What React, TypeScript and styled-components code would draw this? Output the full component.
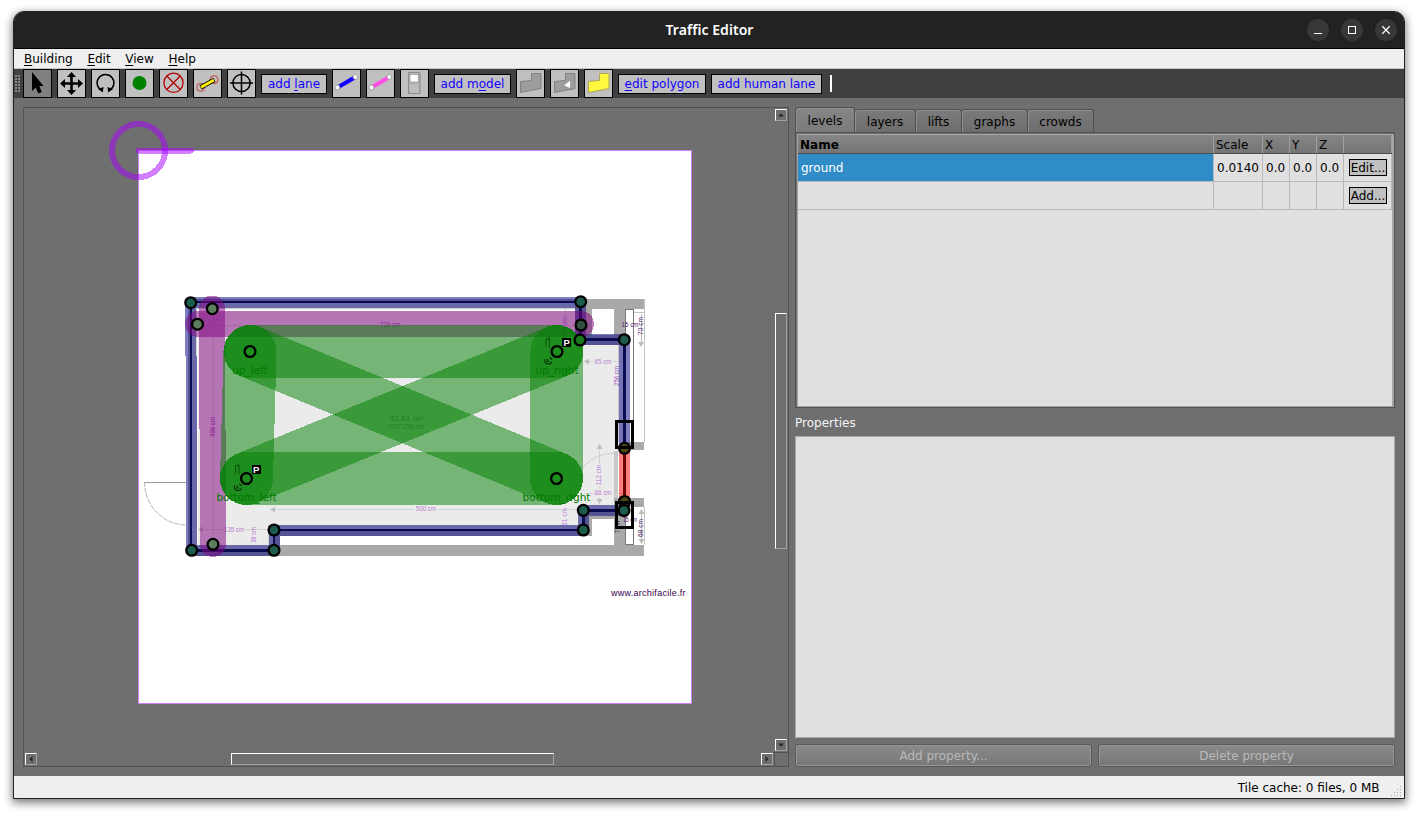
import React from 'react';
import styled, { createGlobalStyle, css } from 'styled-components';

const GlobalStyle = createGlobalStyle`
  * { box-sizing: border-box; }
  body {
    margin: 0;
    background: #fff;
    overflow: hidden;
    font-family: "DejaVu Sans", sans-serif;
    font-size: 12px;
    color: #000;
  }
`;

const Desktop = styled.div`
  padding: 11px 13px 16px;
  height: 815px;
`;

const Window = styled.div`
  display: flex;
  flex-direction: column;
  width: 1392px;
  height: 788px;
  border: 1px solid #222;
  border-radius: 11px 11px 0 0;
  background: #6f6f6f;
  box-shadow: 0 3px 9px 1px rgba(0, 0, 0, 0.5);
  overflow: hidden;
`;

const TitleBar = styled.header`
  display: grid;
  grid-template-columns: 1fr auto 1fr;
  align-items: center;
  height: 37px;
  background: #222;
  border-bottom: 1px solid #000;
`;

const Title = styled.h1`
  grid-column: 2;
  margin: 0;
  padding-left: 1px;
  color: #fff;
  font: 600 14px/20px "Noto Sans", sans-serif;
  letter-spacing: 0.05px;
`;

const WindowButtons = styled.div`
  display: flex;
  justify-content: flex-end;
  gap: 12px;
  padding-right: 7px;
`;

const WindowButton = styled.div`
  width: 22px;
  height: 22px;
  border-radius: 50%;
  background: #373737;
  svg { display: block; }
`;

const MenuBar = styled.nav`
  display: flex;
  gap: 14.7px;
  height: 20px;
  padding-left: 10px;
  background: #efefef;
  border-bottom: 1px solid #c6c6c6;
  line-height: 20px;
`;

const Mnemonic = styled.span`
  text-decoration: underline;
  text-underline-offset: 2px;
  text-decoration-thickness: 1px;
  text-decoration-skip-ink: none;
`;

const ToolBar = styled.div`
  display: flex;
  align-items: center;
  gap: 5px;
  height: 29px;
  background: #404040;
`;

const Grip = styled.svg`
  width: 6px;
  height: 18px;
  margin: 0 -3px 0 1px;
`;

const ToolButton = styled.button<{ $active?: boolean }>`
  width: 29px;
  height: 29px;
  padding: 0;
  border: 1px solid #000;
  background: ${p => (p.$active ? '#808080' : '#c0c0c0')};
  svg { display: block; }
`;

const ToolTextButton = styled.button<{ $width: number }>`
  width: ${p => p.$width}px;
  height: 20px;
  padding: 0;
  border: 1px solid #000;
  background: #c0c0c0;
  color: #1200ff;
  font: 12px/18px "DejaVu Sans", sans-serif;
  white-space: nowrap;
`;

const ToolCaret = styled.div`
  width: 2px;
  height: 17px;
  margin-left: 3px;
  background: #fff;
`;

const Workspace = styled.main`
  display: grid;
  grid-template-columns: 766px 600px;
  gap: 6px;
  height: 678px;
  padding: 9px;
`;

const CanvasFrame = styled.section`
  display: grid;
  grid-template-columns: 750px 14px;
  grid-template-rows: 644px 14px;
  border: 1px solid #525252;
`;

const ScrollBar = styled.div<{ $vertical?: boolean }>`
  display: flex;
  flex-direction: ${p => (p.$vertical ? 'column' : 'row')};
  padding: 1px;
`;

const bevel = css`
  border: 1px solid;
  border-color: #fff #a2a2a2 #a2a2a2 #fff;
`;

const ScrollArrow = styled.div<{ $turn: number; $end?: boolean }>`
  ${bevel}
  width: 12px;
  height: 12px;
  ${p => p.$end && 'margin-top: auto; margin-left: auto;'}
  svg { display: block; transform: rotate(${p => p.$turn}deg); }
`;

const VerticalThumb = styled.div`
  ${bevel}
  height: 236px;
  margin-top: 192px;
`;

const HorizontalThumb = styled.div`
  ${bevel}
  width: 323px;
  margin-left: 194px;
`;

const ScrollCorner = styled.div`
  border-left: 1px solid #525252;
  border-top: 1px solid #525252;
`;

const SidePanel = styled.aside`
  display: flex;
  flex-direction: column;
`;

const Tabs = styled.div`
  display: flex;
  align-items: flex-end;
  height: 25px;
`;

const Tab = styled.div<{ $width: number; $active?: boolean }>`
  width: ${p => p.$width}px;
  height: ${p => (p.$active ? 26 : 23)}px;
  margin-bottom: ${p => (p.$active ? -1 : 0)}px;
  border: 1px solid #505050;
  border-bottom: 0;
  border-left-width: ${p => (p.$active ? 1 : 0)}px;
  border-radius: 3px 3px 0 0;
  background: ${p => (p.$active ? 'linear-gradient(#868686, #7a7a7a)' : 'linear-gradient(#7a7a7a, #6e6e6e)')};
  box-shadow: inset 1px 1px 0 #8f8f8f;
  text-align: center;
  line-height: ${p => (p.$active ? 26 : 25)}px;
`;

const Pane = styled.div`
  height: 276px;
  padding: 1px 0 0 1px;
  border: 1px solid #525252;
`;

const TableFrame = styled.div`
  height: 273px;
  border: 1px solid #a5a5a5;
  border-right-width: 2px;
  background: #e0e0e0;
`;

const columns = 'display: grid; grid-template-columns: 416px 49px 27px 27px 27px 48px;';

const TableHeader = styled.div`
  ${columns}
  height: 19px;
  background: linear-gradient(#868686, #757575);
  border-bottom: 1px solid #4c4c4c;
`;

const HeaderCell = styled.div<{ $bold?: boolean }>`
  padding-left: 2px;
  border-right: 1px solid #a0a0a0;
  line-height: 20px;
  height: 18px;
  font-weight: ${p => (p.$bold ? 700 : 400)};
`;

const TableRow = styled.div`
  ${columns}
  height: 28px;
`;

const Cell = styled.div<{ $selected?: boolean }>`
  display: flex;
  align-items: center;
  padding-left: 3px;
  border-right: 1px solid #b8b8b8;
  border-bottom: 1px solid #b8b8b8;
  color: ${p => (p.$selected ? '#fff' : '#000')};
  background: ${p => (p.$selected ? '#308cc6' : 'transparent')};
`;

const CellButton = styled.button`
  width: 38px;
  height: 17px;
  margin-left: 2px;
  padding: 1px 0 0;
  border: 1px solid #000;
  background: #c0c0c0;
  font: 12px/14px "DejaVu Sans", sans-serif;
  white-space: nowrap;
`;

const SectionLabel = styled.div`
  height: 28px;
  line-height: 30px;
  color: #f4f4f4;
`;

const PropertyList = styled.div`
  height: 302px;
  border: 1px solid #a8a8a8;
  background: #e0e0e0;
`;

const ButtonRow = styled.div`
  display: grid;
  grid-template-columns: 1fr 1fr;
  gap: 6px;
  margin-top: 6px;
`;

const PushButton = styled.button`
  height: 23px;
  padding: 2px 0 0;
  border: 1px solid #595959;
  border-radius: 3px;
  background: linear-gradient(#8a8a8a, #777);
  box-shadow: inset 0 0 0 1px #969696;
  color: #b9b9b9;
  font: 12px/19px "DejaVu Sans", sans-serif;
`;

const StatusBar = styled.footer`
  display: flex;
  justify-content: flex-end;
  height: 22px;
  background: #efefef;
  line-height: 24px;
`;

const SizeGrip = styled.svg`
  width: 12px;
  height: 12px;
  margin: 10px 1px 0 11.5px;
`;

const range = (n: number) => Array.from({ length: n }, (_, i) => i);

const outline = 'M3.5 11.5 L14.5 10.5 V3.5 H24 V18.5 L3.5 22.5Z';

const icons: Record<string, React.ReactNode> = {
  select: <path d="M8 2 V21 L11.800 17.500 L14.200 23.500 L17.800 22 L15.300 16 H19.500Z" fill="#000" />,
  move: (
    <path
      d="M13.500 2 L18 7 H14.800 V12.200 H20 V9 L25 13.500 L20 18 V14.800 H14.800 V20 H18 L13.500 25 L9 20 H12.200 V14.800 H7 V18 L2 13.500 L7 9 V12.200 H12.200 V7 H9Z"
      fill="#000"
    />
  ),
  rotate: (
    <g>
      <path d="M9.400 20.200 A8.400 8.400 0 1 1 17.600 20.200" fill="none" stroke="#000" strokeWidth="1.500" />
      <path d="M6 19 L11.600 17 L10.800 22.500Z M21 19 L15.400 17 L16.200 22.500Z" fill="#000" />
    </g>
  ),
  vertex: <circle cx="13.500" cy="13" r="7" fill="#008000" />,
  fiducial: (
    <g fill="none" stroke="#b40000" strokeWidth="1.300">
      <circle cx="13.500" cy="12.800" r="9.600" />
      <path d="M6.800 6 L20.200 19.500 M20.200 6 L6.800 19.500" />
    </g>
  ),
  measurement: (
    <g>
      <g fill="none" stroke="#c03030" strokeWidth=".9">
        <circle cx="6.700" cy="17.300" r="4" />
        <circle cx="20" cy="9.700" r="4" />
      </g>
      <path d="M6.500 17.500 L20.500 9.800" stroke="#000" strokeWidth="4.400" />
      <path d="M7 17.200 L20 10.100" stroke="#fff200" strokeWidth="2.800" />
    </g>
  ),
  origin: (
    <g fill="none" stroke="#000" strokeWidth="1.500">
      <circle cx="13.500" cy="13" r="8.600" />
      <path d="M13.500 1.500 V24.500 M2 13 H25" />
    </g>
  ),
  wall: (
    <g>
      <path d="M5 17.200 L22 7.200" stroke="#1200ff" strokeWidth="4.200" />
      <g fill="#fff" stroke="#888" strokeWidth=".7">
        <circle cx="4.500" cy="17.500" r="2.400" />
        <circle cx="22.300" cy="7" r="2.400" />
      </g>
    </g>
  ),
  door: (
    <g>
      <path d="M5 17.200 L22 7.200" stroke="#ff4fe8" strokeWidth="4.200" />
      <g fill="#fff" stroke="#888" strokeWidth=".7">
        <circle cx="4.500" cy="17.500" r="2.400" />
        <circle cx="22.300" cy="7" r="2.400" />
      </g>
    </g>
  ),
  lift: (
    <g>
      <rect x="7.500" y="2.500" width="11.500" height="21" rx="1" fill="#bdbdbd" stroke="#8c8c8c" strokeWidth="1.200" />
      <rect x="9" y="4.500" width="8.500" height="7.500" fill="#fff" stroke="#999" strokeWidth=".8" />
      <path d="M8 13.500 H18.500 M16.500 15 l2 2" stroke="#a0a0a0" strokeWidth=".8" />
    </g>
  ),
  floor: <path d={outline} fill="#9d9d9d" stroke="#818181" />,
  hole: (
    <g>
      <path d={outline} fill="#9d9d9d" stroke="#818181" />
      <path d="M12.500 15.500 L19.500 10 V18.500Z" fill="#fff" stroke="#888" strokeWidth=".6" />
    </g>
  ),
  roi: <path d={outline} fill="#fff83c" stroke="#b0a850" />,
};

const Icon = ({ name }: { name: string }) => (
  <svg width="27" height="27" viewBox="0 0 27 27">{icons[name]}</svg>
);

const Arrow = () => (
  <svg width="10" height="10" viewBox="0 0 10 10">
    <path d="M5 3.200 L8 6.500 H2Z" fill="#2a2a2a" />
  </svg>
);

type Point = [number, number];

const UL: Point = [250, 351.5];
const UR: Point = [557, 351.5];
const BL: Point = [246.5, 478.5];
const BR: Point = [556.5, 478.5];

const lanes: [Point, Point][] = [[UL, UR], [UL, BL], [UL, BR], [UR, BL], [UR, BR], [BL, BR]];

const wallPath =
  'M624.500 448 V339.500 H580.500 V302 L190.900 302.400 L191.400 550.500 H274 V530 H583.500 V510.500 H624.500 V502';

const wallVertices: Point[] = [
  [190.7, 302.7], [580.7, 301.7], [624.3, 339.7],
  [583.3, 510.3], [583.3, 530], [274, 530], [274, 550.3], [191.7, 550.3],
];

const Segment = ({ ends, ...rest }: { ends: [Point, Point] } & Omit<React.SVGProps<SVGLineElement>, 'ref'>) => (
  <line x1={ends[0][0]} y1={ends[0][1]} x2={ends[1][0]} y2={ends[1][1]} {...rest} />
);

const Vertex = ({ at, fill = 'none' }: { at: Point; fill?: string }) => (
  <circle cx={at[0]} cy={at[1]} r="5.400" fill={fill} stroke="#000" strokeWidth="2.300" />
);

const Dimension = ({ x, y, w, turn, color = '#bb80d2', children }: {
  x: number; y: number; w: number; turn?: boolean; color?: string; children: string;
}) => (
  <text
    x={x}
    y={y}
    textAnchor="middle"
    textLength={w}
    lengthAdjust="spacingAndGlyphs"
    fill={color}
    transform={turn ? `rotate(-90 ${x} ${y})` : undefined}
    fontFamily="Liberation Sans, sans-serif"
    fontSize="7.500"
  >
    {children}
  </text>
);

const RobotMarks = ({ x, y }: { x: number; y: number }) => (
  <g>
    <path d={`M${x - 11} ${y - 5} v-8 h3.500 v9 M${x - 8} ${y - 15} v2`} fill="none" stroke="#0a4a0a" strokeWidth=".9" />
    <rect x={x + 5} y={y - 14} width="9" height="9" fill="#000" shapeRendering="crispEdges" />
    <text x={x + 9.7} y={y - 6} textAnchor="middle" fill="#fff" fontSize="9.500" fontWeight="700" fontFamily="Liberation Sans, sans-serif">P</text>
    <path d={`M${x - 12} ${y + 7} v3 l2 2 h3 l2 -2 M${x - 9.5} ${y + 7} v2.500 h2 M${x - 7} ${y + 5.5} l2 2`} fill="none" stroke="#042c04" strokeWidth="1.100" />
  </g>
);

const FloorPlan = () => (
  <svg width="750" height="644" viewBox="24 108 750 644">
    <g shapeRendering="crispEdges">
      <rect x="138.500" y="150.500" width="553" height="553" fill="#fff" stroke="#d07fff" />
      <path d="M188 299 H644 V309 H188Z M188 299 H197 V556 H188Z M188 545 H644 V556 H188Z M614 299 H626 V345 H614Z M626 442 H644 V450 H626Z M614 498 H644 V507 H614Z M614 498 H626 V556 H614Z M575 309 H592 V345 H575Z M592 335 H614 V345 H592Z" fill="#a9a9a9" />
      <path d="M192 303 H575 V309 H197 V545 H192Z M192 545 H268 V550 H192Z" fill="#d2d2d2" />
      <path d="M197 309 H575 V345 H625 V450 H614 V515 H579 V525 H268 V545 H197Z" fill="#ebebeb" />
      <path d="M197 310.500 H575 M197.500 310 V545" stroke="#fff" fill="none" />
      <path d="M268 525 H579 V505 H614 V519 H592 V536 H280 V545 H268Z" fill="#a9a9a9" />
      <path d="M268 525 H579 V530 H274 V545 H268Z M579 505 H614 V510 H584 V530 H579Z" fill="#d2d2d2" />
      <path d="M614 451 H618 V498 H614Z M618 345 H619 V442 H618Z" fill="#c8c8c8" />
      <path d="M618 451 H645 V498 H618Z" fill="#fff" />
      <path d="M644.500 299 V442 M644.500 507 V545 M634 312.500 H645" fill="none" stroke="#c4c4c4" />
      <path d="M625.500 442 V309.500 H633.500 V442 M625.500 507 V544.500 H633.500 V507" fill="#fff" stroke="#777" />
      <path d="M197 325.500 H575 M213.500 309 V545 M274 509.500 H583 M199 529.500 H268 M565.500 309 V345 M584 361.500 H622 M599.500 447 V505 M584 493.500 H622 M584 509.500 H614" fill="none" stroke="#d2d2d2" />
    </g>
    <path d="M144 482.500 H186" stroke="#999" fill="none" />
    <path d="M144.500 482 A42 43 0 0 0 186 525" stroke="#aaa" strokeWidth=".9" strokeDasharray="5 1" fill="none" />
    <path d="M570 498 A45 45 0 0 1 615 453" stroke="#cfcfcf" fill="none" />
    <path d="M599.500 444 l3 5 h-6Z M599.500 504 l3 -5 h-6Z M641 347 l3 -5 h-6Z M641.500 509 l3 5 h-6Z M641.500 544 l3 -5 h-6Z M584 361.500 l5 -3 v6Z M270 509.500 l5 -3 v6Z M198 529.500 l5 -3 v6Z" fill="#bdbdbd" />
    <path d="M641.500 314 V343 M641.500 511 V542" stroke="#b9b9b9" />

    <path d="M378 319 h24 v9 h-24Z M414 504 h24 v9 h-24Z M223 524 h22 v9 h-22Z M593 357 h20 v8 h-20Z M596 464 h8 v22 h-8Z M593 489 h20 v8 h-20Z" fill="#ebebeb" />
    <Dimension x={390} y={326.5} w={20} color="#a050c0">729 cm</Dimension>
    <Dimension x={426} y={511} w={20}>500 cm</Dimension>
    <Dimension x={234} y={531.5} w={20}>135 cm</Dimension>
    <Dimension x={256} y={535} w={16} turn>38 cm</Dimension>
    <Dimension x={215} y={427} w={20} turn color="#902898">496 cm</Dimension>
    <Dimension x={603} y={363.5} w={17}>65 cm</Dimension>
    <Dimension x={603} y={495} w={17}>88 cm</Dimension>
    <Dimension x={601} y={475} w={20} turn>112 cm</Dimension>
    <Dimension x={619} y={376} w={20} turn color="#a060c0">256 cm</Dimension>
    <Dimension x={567} y={517} w={18} turn>31 cm</Dimension>
    <Dimension x={567} y={327} w={20} turn>36 cm</Dimension>
    <Dimension x={630} y={327} w={17} color="#5a2070">15 cm</Dimension>
    <Dimension x={643} y={326} w={18} turn color="#5a2070">70 cm</Dimension>
    <Dimension x={643} y={528} w={18} turn color="#4a2060">68 cm</Dimension>
    <Dimension x={620} y={527} w={12} turn color="#4a2060">7 cm</Dimension>
    <Dimension x={630} y={522} w={14} color="#5a2070">15 cm</Dimension>
    <Dimension x={406} y={421} w={34} color="#777">32.61 m²</Dimension>
    <Dimension x={406} y={429} w={36} color="#888">HSP 250 cm</Dimension>
    <text x="611" y="596" textLength="74.500" fill="#35004f" fontFamily="Liberation Sans, sans-serif" fontSize="9">www.archifacile.fr</text>

    <g shapeRendering="crispEdges" fill="none">
      <path d={wallPath} stroke="#000080" strokeOpacity=".5" strokeWidth="11" strokeLinejoin="round" />
      <path d={wallPath} stroke="#0b0b52" strokeWidth="2.200" />
      <path d="M624.500 448 V502" stroke="#f00" strokeOpacity=".5" strokeWidth="11" />
      <path d="M624.500 448 V502" stroke="#700000" strokeWidth="2.200" />
      <Segment ends={[[198, 324], [581, 324]]} stroke="#800080" strokeOpacity=".5" strokeWidth="26" strokeLinecap="round" />
      <Segment ends={[[212, 308.5], [213, 544]]} stroke="#800080" strokeOpacity=".5" strokeWidth="26" strokeLinecap="round" />
      {lanes.map((ends, i) => (
        <Segment key={i} ends={ends} stroke="#008000" strokeOpacity=".5" strokeWidth="53" strokeLinecap="round" />
      ))}
    </g>

    <g fill="#007a00" fontFamily="DejaVu Sans, sans-serif" fontSize="10.500" textAnchor="middle">
      <text x="250" y="374">up_left</text>
      <text x="557" y="374">up_right</text>
      <text x="246.500" y="501">bottom_left</text>
      <text x="556.500" y="501">bottom_right</text>
    </g>

    {wallVertices.map((at, i) => <Vertex key={i} at={at} fill="#1b5c4d" />)}
    <Vertex at={[212.3, 308.7]} fill="#5d7d5f" />
    <Vertex at={[197.5, 324.2]} fill="#5d7d5f" />
    <Vertex at={[213, 544.3]} fill="#5d7d5f" />
    <Vertex at={[581, 325]} fill="#33513f" />
    <Vertex at={[580, 340]} fill="#18781c" />
    <Vertex at={[624.5, 448.3]} fill="#4c4a10" />
    <Vertex at={[624.5, 501.5]} fill="#4c4a10" />
    <Vertex at={[624, 510.5]} fill="#1b5c4d" />
    {[UL, UR, BL, BR].map((at, i) => <Vertex key={i} at={at} />)}
    <path d="M616.500 421.500 H632.500 V447.500 H616.500Z M616.500 502 H632.500 V527 H616.500Z" fill="none" stroke="#000" strokeWidth="3" shapeRendering="crispEdges" />
    <RobotMarks x={557} y={352} />
    <RobotMarks x={246.5} y={478.5} />

    <g fill="none" stroke="#a800ff" strokeOpacity=".5" strokeWidth="6" shapeRendering="crispEdges">
      <circle cx="138.500" cy="150.500" r="26.500" />
      <path d="M138.500 150.500 H191" strokeLinecap="round" />
    </g>
  </svg>
);

export default function App() {
  return (
    <>
      <GlobalStyle />
      <Desktop>
        <Window>
          <TitleBar>
            <Title>Traffic Editor</Title>
            <WindowButtons>
              <WindowButton><svg width="22" height="22"><path d="M7 14.500 h8" stroke="#fff" /></svg></WindowButton>
              <WindowButton><svg width="22" height="22"><rect x="7.500" y="7.500" width="7" height="7" fill="none" stroke="#fff" /></svg></WindowButton>
              <WindowButton><svg width="22" height="22"><path d="M7.300 7.300 L14.700 14.700 M14.700 7.300 L7.300 14.700" stroke="#fff" strokeWidth="1.300" /></svg></WindowButton>
            </WindowButtons>
          </TitleBar>
          <MenuBar>
            <span><Mnemonic>B</Mnemonic>uilding</span>
            <span><Mnemonic>E</Mnemonic>dit</span>
            <span><Mnemonic>V</Mnemonic>iew</span>
            <span><Mnemonic>H</Mnemonic>elp</span>
          </MenuBar>
          <ToolBar>
            <Grip>
              {range(12).map(i => (
                <rect key={i} x={(i % 2) * 3} y={Math.floor(i / 2) * 3} width="2" height="2" fill="#8a8a8a" />
              ))}
            </Grip>
            <ToolButton $active><Icon name="select" /></ToolButton>
            <ToolButton><Icon name="move" /></ToolButton>
            <ToolButton><Icon name="rotate" /></ToolButton>
            <ToolButton><Icon name="vertex" /></ToolButton>
            <ToolButton><Icon name="fiducial" /></ToolButton>
            <ToolButton><Icon name="measurement" /></ToolButton>
            <ToolButton><Icon name="origin" /></ToolButton>
            <ToolTextButton $width={66}>add <Mnemonic>l</Mnemonic>ane</ToolTextButton>
            <ToolButton><Icon name="wall" /></ToolButton>
            <ToolButton><Icon name="door" /></ToolButton>
            <ToolButton><Icon name="lift" /></ToolButton>
            <ToolTextButton $width={77}>add m<Mnemonic>o</Mnemonic>del</ToolTextButton>
            <ToolButton><Icon name="floor" /></ToolButton>
            <ToolButton><Icon name="hole" /></ToolButton>
            <ToolButton><Icon name="roi" /></ToolButton>
            <ToolTextButton $width={88}><Mnemonic>e</Mnemonic>dit polygon</ToolTextButton>
            <ToolTextButton $width={111}>add human lane</ToolTextButton>
            <ToolCaret />
          </ToolBar>
          <Workspace>
            <CanvasFrame>
              <FloorPlan />
              <ScrollBar $vertical>
                <ScrollArrow $turn={0}><Arrow /></ScrollArrow>
                <VerticalThumb />
                <ScrollArrow $turn={180} $end><Arrow /></ScrollArrow>
              </ScrollBar>
              <ScrollBar>
                <ScrollArrow $turn={-90}><Arrow /></ScrollArrow>
                <HorizontalThumb />
                <ScrollArrow $turn={90} $end><Arrow /></ScrollArrow>
              </ScrollBar>
              <ScrollCorner />
            </CanvasFrame>
            <SidePanel>
              <Tabs>
                <Tab $width={60} $active>levels</Tab>
                <Tab $width={61}>layers</Tab>
                <Tab $width={46}>lifts</Tab>
                <Tab $width={66}>graphs</Tab>
                <Tab $width={66}>crowds</Tab>
              </Tabs>
              <Pane>
                <TableFrame>
                  <TableHeader>
                    <HeaderCell $bold>Name</HeaderCell>
                    <HeaderCell>Scale</HeaderCell>
                    <HeaderCell>X</HeaderCell>
                    <HeaderCell>Y</HeaderCell>
                    <HeaderCell>Z</HeaderCell>
                    <HeaderCell />
                  </TableHeader>
                  <TableRow>
                    <Cell $selected>ground</Cell>
                    <Cell>0.0140</Cell>
                    <Cell>0.0</Cell>
                    <Cell>0.0</Cell>
                    <Cell>0.0</Cell>
                    <Cell><CellButton>Edit...</CellButton></Cell>
                  </TableRow>
                  <TableRow>
                    <Cell /><Cell /><Cell /><Cell /><Cell />
                    <Cell><CellButton>Add...</CellButton></Cell>
                  </TableRow>
                </TableFrame>
              </Pane>
              <SectionLabel>Properties</SectionLabel>
              <PropertyList />
              <ButtonRow>
                <PushButton>Add property...</PushButton>
                <PushButton>Delete property</PushButton>
              </ButtonRow>
            </SidePanel>
          </Workspace>
          <StatusBar>
            Tile cache: 0 files, 0 MB
            <SizeGrip>
              {[[9, 0], [6, 3], [9, 3], [3, 6], [6, 6], [9, 6], [0, 9], [3, 9], [6, 9], [9, 9]].map(([x, y]) => (
                <rect key={`${x}-${y}`} x={x} y={y} width="1" height="1" fill="#aaa" />
              ))}
            </SizeGrip>
          </StatusBar>
        </Window>
      </Desktop>
    </>
  );
}
